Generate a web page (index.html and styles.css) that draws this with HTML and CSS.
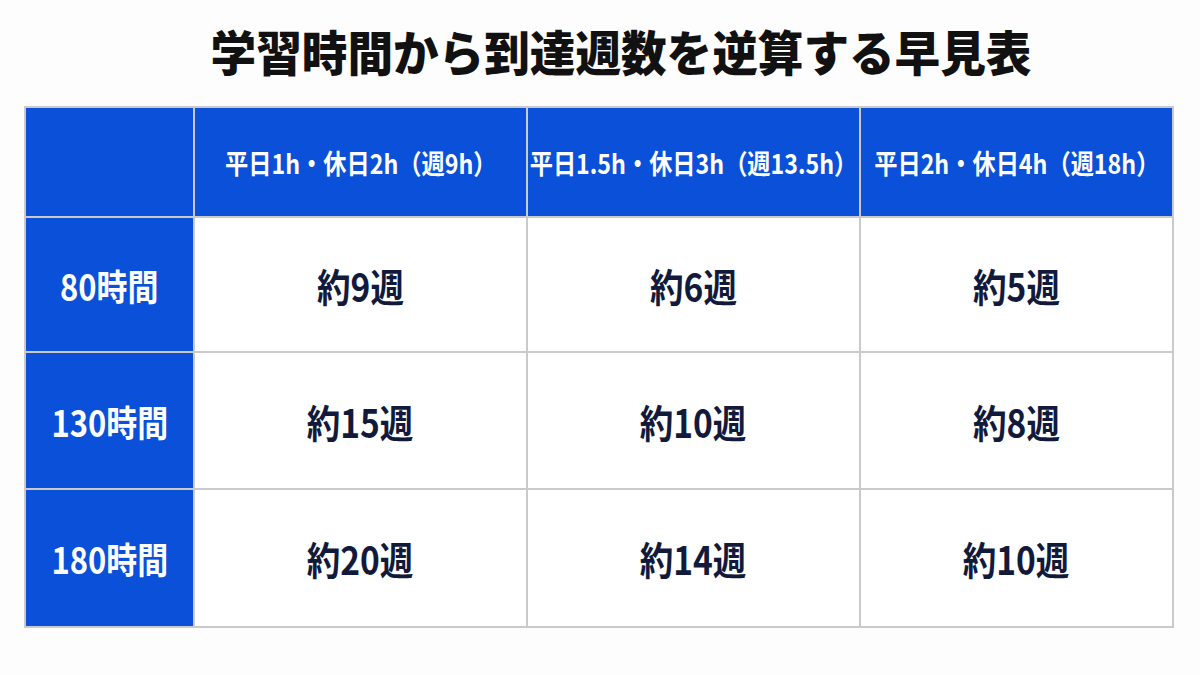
FILE: index.html
```html
<!DOCTYPE html>
<html lang="ja">
<head>
<meta charset="utf-8">
<link rel="stylesheet" href="styles.css">
</head>
<body>
<h1 class="title"><span class="title-text">学習時間から到達週数を逆算する早見表</span></h1>
<div class="table">
  <div class="cell head corner"></div>
  <div class="cell head"><span class="sq">平日1h・休日2h（週9h）</span></div>
  <div class="cell head"><span class="sq">平日1.5h・休日3h（週13.5h）</span></div>
  <div class="cell head"><span class="sq">平日2h・休日4h（週18h）</span></div>

  <div class="cell label"><span class="sq">80時間</span></div>
  <div class="cell val"><span class="sq">約9週</span></div>
  <div class="cell val"><span class="sq">約6週</span></div>
  <div class="cell val"><span class="sq">約5週</span></div>

  <div class="cell label"><span class="sq">130時間</span></div>
  <div class="cell val"><span class="sq">約15週</span></div>
  <div class="cell val"><span class="sq">約10週</span></div>
  <div class="cell val"><span class="sq">約8週</span></div>

  <div class="cell label"><span class="sq">180時間</span></div>
  <div class="cell val"><span class="sq">約20週</span></div>
  <div class="cell val"><span class="sq">約14週</span></div>
  <div class="cell val"><span class="sq">約10週</span></div>
</div>
</body>
</html>
```
FILE: styles.css
```css
html, body {
  margin: 0;
  padding: 0;
  background: #fdfdfd;
  font-family: "Noto Sans CJK JP", "Noto Sans", sans-serif;
}
.title {
  margin: 0;
  height: 106px;
  display: flex;
  align-items: center;
  justify-content: center;
  padding-left: 42px;
  padding-bottom: 6px;
  box-sizing: border-box;
  font-size: 48px;
  font-weight: 900;
  color: #111111;
}
.title-text {
  display: inline-block;
  transform: scaleX(0.95);
}
.table {
  margin-left: 24px;
  width: 1150px;
  box-sizing: border-box;
  padding: 2px;
  background: #cacaca;
  display: grid;
  grid-template-columns: 167px 331px 331px 311px;
  grid-template-rows: 108px 133px 135px 136px;
  gap: 2px;
}
.cell {
  display: flex;
  align-items: center;
  justify-content: center;
  background: #ffffff;
  font-weight: 700;
}
.sq {
  display: inline-block;
  transform: scaleX(0.86);
  white-space: nowrap;
}
.head {
  background: #0a50d8;
  color: #ffffff;
  font-size: 27px;
}
.label {
  background: #0a50d8;
  color: #ffffff;
  font-size: 36px;
}
.val {
  color: #121a3c;
  font-size: 39px;
}
```
